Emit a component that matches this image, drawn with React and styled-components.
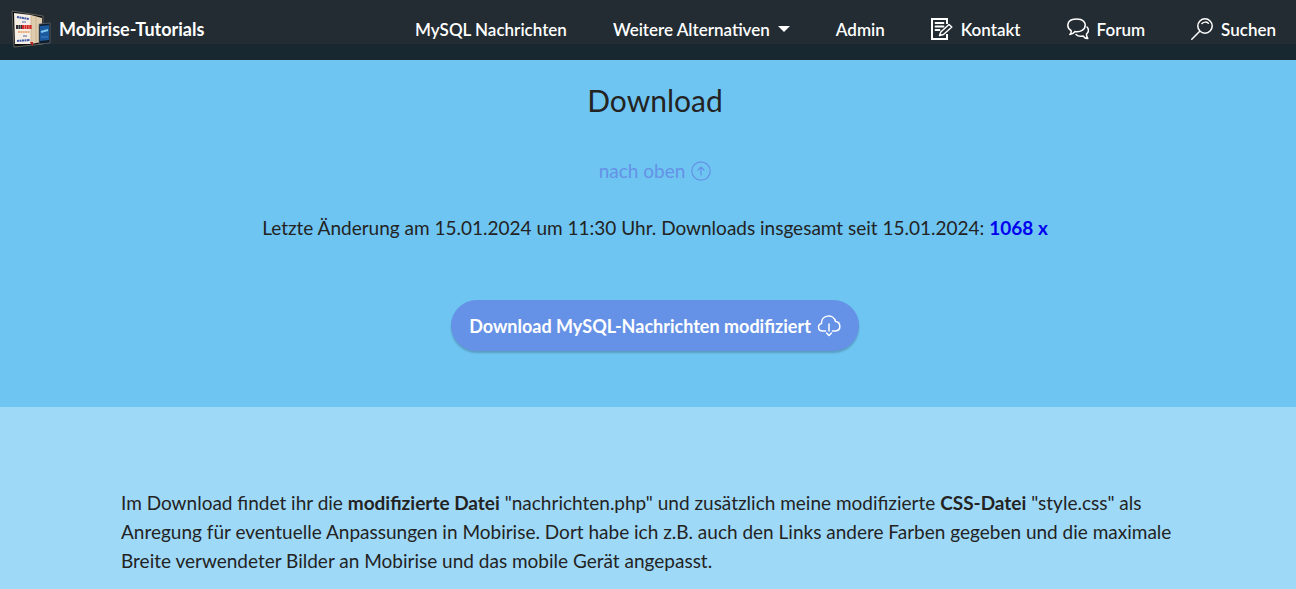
import styled, { createGlobalStyle } from "styled-components";

const GlobalStyle = createGlobalStyle`
  *, *::before, *::after {
    box-sizing: border-box;
  }

  body {
    margin: 0;
    background-color: #9fd9f8;
    color: #232323;
    font-family: Lato, "Open Sans", sans-serif;
    font-size: 19px;
    line-height: 29px;
  }
`;

const Navbar = styled.header`
  display: flex;
  align-items: center;
  justify-content: space-between;
  min-height: 60px;
  padding: 0 20px 2px 11px;
  background: linear-gradient(#232c32 44px, #182830 44px);
`;

const Brand = styled.a`
  display: flex;
  align-items: center;
  gap: 8px;
  color: #fff;
  font-size: 18px;
  font-weight: 700;
  text-decoration: none;
`;

const NavList = styled.ul`
  display: flex;
  align-items: center;
  gap: 46px;
  margin: 0;
  padding: 0;
  list-style: none;
`;

const NavLink = styled.a`
  display: flex;
  align-items: center;
  gap: 8px;
  color: #fff;
  font-size: 17px;
  font-weight: 600;
  text-decoration: none;
  white-space: nowrap;
`;

const Caret = styled.span`
  border: 6px solid transparent;
  border-top-color: #fff;
  border-bottom: 0;
`;

const LineIcon = styled.svg`
  flex: none;
  width: ${({ $size }) => $size}px;
  height: ${({ $size }) => $size}px;
  fill: none;
  stroke: currentColor;
  stroke-width: ${({ $weight }) => $weight || 1.5};
  stroke-linecap: round;
  stroke-linejoin: round;
`;

const DownloadSection = styled.section`
  display: flex;
  flex-direction: column;
  align-items: center;
  padding: 20px 0 56px 14px;
  background-color: #6ec5f2;
  text-align: center;
`;

const Title = styled.h1`
  margin: 0 0 36px;
  font-size: 30px;
  font-weight: 400;
  line-height: 40px;
`;

const TopLink = styled.a`
  display: flex;
  align-items: center;
  gap: 6px;
  margin-bottom: 28px;
  color: #6592e6;
  text-decoration: none;
`;

const Status = styled.p`
  margin: 0 0 58px;
`;

const Count = styled.strong`
  color: #0000f0;
`;

const DownloadButton = styled.button`
  display: flex;
  align-items: center;
  gap: 6px;
  min-height: 51px;
  padding: 0 18px;
  border: none;
  border-radius: 26px;
  background-color: #6592e6;
  box-shadow: 0 2px 2px rgba(0, 0, 0, 0.2);
  color: #fff;
  font-family: inherit;
  font-size: 18px;
  font-weight: 700;
  cursor: pointer;
`;

const InfoSection = styled.section`
  padding: 81px 0 15px 14px;
  background-color: #9fd9f8;
`;

const InfoText = styled.p`
  max-width: 1068px;
  margin: 0 auto;
`;

const Logo = () => (
  <svg width="40" height="38" viewBox="0 0 40 38" aria-hidden="true">
    <path d="M1 1 L32 6 V34 L3 37 Z" fill="#0d0f10" stroke="#77736d" strokeWidth=".8" />
    <path d="M3 3 L20 5 V34 L4 34 Z" fill="#f5efe6" />
    <path d="M20 5 L31 8 V32 L20 34 Z" fill="#dfccae" />
    <path d="M20 5 V34 M25 7 V33" stroke="#c2a783" strokeWidth=".7" />
    <path d="M6 7 L18 9" stroke="#425aa8" strokeWidth="2" strokeDasharray="2 .5" />
    <path d="M11 12 H15" stroke="#5269aa" strokeWidth="1" />
    <path d="M5 17 H11" stroke="#302d35" strokeWidth="4" strokeDasharray="2 .4" />
    <path d="M11 17 H21" stroke="#d32828" strokeWidth="4" strokeDasharray="2 .4" />
    <path d="M7 22 H19" stroke="#e99a62" strokeWidth="1.5" strokeDasharray="2 .4" />
    <path d="M12 26 H16" stroke="#56649a" strokeWidth="1" />
    <path d="M6 31 L19 30" stroke="#4059a6" strokeWidth="2" strokeDasharray="2 .5" />
    <path d="M19 32 H22 V36 L20 34 Z" fill="#bd2222" />
    <path d="M28 14 L39 13 V33 L28 34 Z" fill="#101c2a" stroke="#66737d" strokeWidth=".7" />
    <path d="M29 16 L38 15 V30 L29 31 Z" fill="#1b5a9e" />
    <path d="M30 22 L37 20" stroke="#80c7ef" strokeWidth="2" />
    <path d="M30 27 H37" stroke="#3d86c8" strokeWidth="1" />
  </svg>
);

const FormIcon = () => (
  <LineIcon $size={22} $weight={1.8} viewBox="0 0 22 22" aria-hidden="true">
    <path
      d="M16 6 V1 H1 V21 H16 V16"
      strokeWidth="2"
      strokeLinecap="butt"
      strokeLinejoin="miter"
    />
    <path d="M4.5 5 H12.5 M4.5 8.5 H12.5 M4.5 12 H8.5" />
    <path d="M8.5 17.5 L9.8 14 L18 6.5 L20.8 9 L12.5 16.5 Z" strokeWidth="1.5" />
  </LineIcon>
);

const ChatIcon = () => (
  <LineIcon $size={22} viewBox="0 0 22 22" aria-hidden="true">
    <path d="M4 12.5 C-1 9.5 .3 3 5.5 1.5 C11 0 17.5 1.5 18.2 6.5 C18.5 12 13 14.5 8 13.5 C6.5 15.5 4.8 16.5 2.8 16.5 C4 15.5 4.5 14 4 12.5 Z" />
    <path d="M20 9 C22 11 22 14 19.5 16 C19.3 18 20 19 20.8 20.5 C18.5 20.5 17 19.5 16 18 C13 18.6 10.5 18 9 16.5" />
  </LineIcon>
);

const SearchIcon = () => (
  <LineIcon $size={22} viewBox="0 0 22 22" aria-hidden="true">
    <circle cx="14" cy="8" r="7.2" />
    <path d="M8.5 13.5 L.8 21.2 M11 5.5 C12.8 3.7 15.7 3.7 17.3 5.3" />
  </LineIcon>
);

const UpIcon = () => (
  <LineIcon $size={20} $weight={1.2} viewBox="0 0 20 20" aria-hidden="true">
    <circle cx="10" cy="10" r="9.2" />
    <path d="M10 14 V6 M7 9 L10 6 L13 9" />
  </LineIcon>
);

const CloudIcon = () => (
  <LineIcon $size={24} viewBox="0 0 24 24" aria-hidden="true">
    <path d="M8.5 17 H5.5 C.5 17 .3 10.5 4.5 9.5 C4 .8 16.5 -.8 18.5 7.5 C24 8 24.5 16.5 18.5 17 H15.5" />
    <path d="M12 10 V17 M9.5 19 L12 21.5 L14.5 19" />
  </LineIcon>
);

const navItems = [
  { label: "MySQL Nachrichten" },
  { label: "Weitere Alternativen", dropdown: true },
  { label: "Admin" },
  { label: "Kontakt", Icon: FormIcon },
  { label: "Forum", Icon: ChatIcon },
  { label: "Suchen", Icon: SearchIcon },
];

const App = () => (
  <>
    <GlobalStyle />
    <Navbar>
      <Brand href="#top">
        <Logo />
        Mobirise-Tutorials
      </Brand>
      <nav>
        <NavList>
          {navItems.map(({ label, Icon, dropdown }) => (
            <li key={label}>
              <NavLink href="#top">
                {Icon && <Icon />}
                {label}
                {dropdown && <Caret />}
              </NavLink>
            </li>
          ))}
        </NavList>
      </nav>
    </Navbar>
    <main>
      <DownloadSection>
        <Title>Download</Title>
        <TopLink href="#top">
          nach oben
          <UpIcon />
        </TopLink>
        <Status>
          Letzte Änderung am 15.01.2024 um 11:30 Uhr. Downloads insgesamt seit
          15.01.2024: <Count>1068 x</Count>
        </Status>
        <DownloadButton type="button">
          Download MySQL-Nachrichten modifiziert
          <CloudIcon />
        </DownloadButton>
      </DownloadSection>
      <InfoSection>
        <InfoText>
          Im Download findet ihr die <strong>modifizierte Datei</strong>{" "}
          "nachrichten.php" und zusätzlich meine modifizierte{" "}
          <strong>CSS-Datei</strong> "style.css" als Anregung für eventuelle
          Anpassungen in Mobirise. Dort habe ich z.B. auch den Links andere
          Farben gegeben und die maximale Breite verwendeter Bilder an Mobirise
          und das mobile Gerät angepasst.
        </InfoText>
      </InfoSection>
    </main>
  </>
);

export default App;
